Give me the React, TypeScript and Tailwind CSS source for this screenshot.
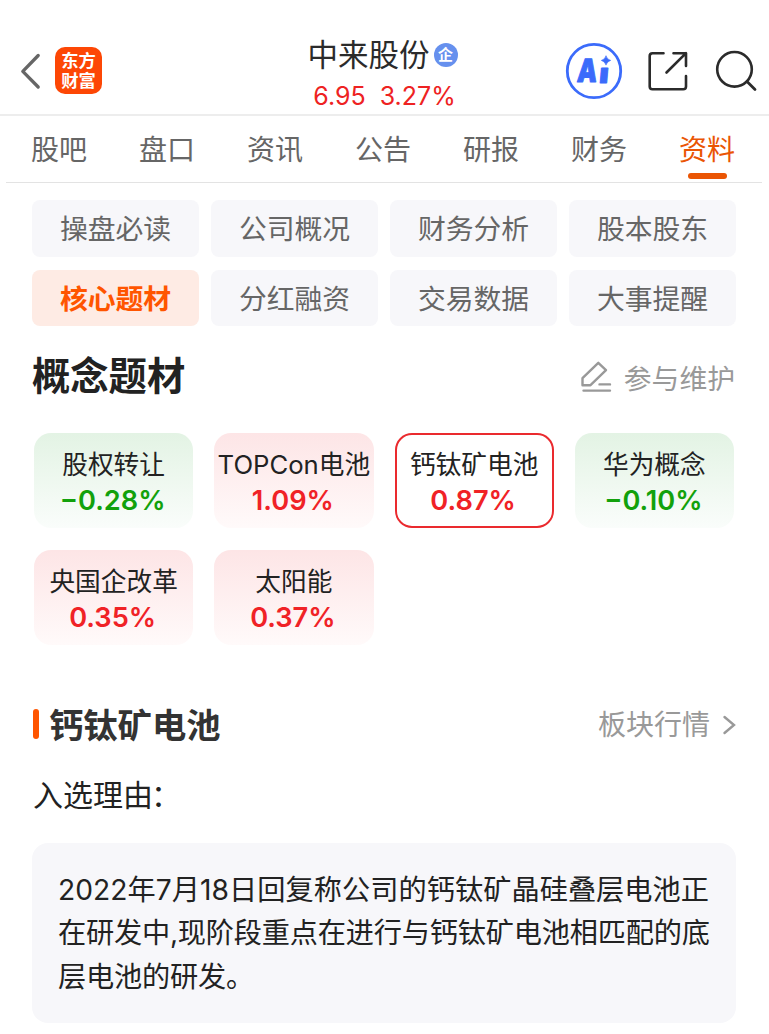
import React from "react";
import clsx from "clsx";

const tabs = ["股吧", "盘口", "资讯", "公告", "研报", "财务", "资料"];

const menus = [
  "操盘必读",
  "公司概况",
  "财务分析",
  "股本股东",
  "核心题材",
  "分红融资",
  "交易数据",
  "大事提醒",
];

const concepts = [
  { name: "股权转让", change: "−0.28%", up: false },
  { name: "TOPCon电池", change: "1.09%", up: true },
  { name: "钙钛矿电池", change: "0.87%", up: true },
  { name: "华为概念", change: "−0.10%", up: false },
  { name: "央国企改革", change: "0.35%", up: true },
  { name: "太阳能", change: "0.37%", up: true },
];

const reason = [
  { text: "2022年7月18日回复称公司的钙钛矿晶硅叠层电池正", tracking: "tracking-[0.05px]" },
  { text: "在研发中,现阶段重点在进行与钙钛矿电池相匹配的底", tracking: "tracking-[-0.2px]" },
  { text: "层电池的研发。", tracking: "tracking-[-0.2px]" },
];

function AiIcon() {
  return (
    <svg width="58" height="58" viewBox="0 0 58 58" fill="none">
      <circle cx="29" cy="29" r="26.7" stroke="#3b6bfb" strokeWidth="2.8" />
      <g
        fontFamily="Inter"
        fontWeight="900"
        fill="#3b6bfb"
        stroke="#3b6bfb"
        strokeWidth="1"
        strokeLinejoin="round"
      >
        <text transform="translate(11.4 40) skewX(-5) scale(.78 1)" fontSize="32">
          A
        </text>
        <text transform="translate(33.6 40.6) skewX(-5) scale(1.08 .92)" fontSize="30">
          ı
        </text>
      </g>
      <path
        d="M41 13.7q1 3.8 4.7 4.7q-3.7 1-4.7 4.7q-1-3.7-4.7-4.7q3.7-.9 4.7-4.7z"
        fill="#3b6bfb"
        stroke="#3b6bfb"
        strokeWidth=".6"
      />
    </svg>
  );
}

function Header() {
  return (
    <header className="grid h-[116px] grid-cols-[1fr_auto_1fr] border-b-2 border-[#ededed] pt-[36px]">
      <div className="flex items-start pl-[20px]">
        <svg className="mt-[16px]" width="22" height="38" viewBox="0 0 22 38" fill="none">
          <path
            d="M18.2 3.5L2.8 19.3L18.2 35"
            stroke="#666"
            strokeWidth="3.3"
            strokeLinecap="round"
            strokeLinejoin="round"
          />
        </svg>
        <div className="mt-[11px] ml-[13px] flex h-[47px] w-[47px] flex-col items-center justify-center rounded-[10px] bg-[#fd4705] text-[17.3px] leading-[19.5px] font-bold text-white">
          <span>东方</span>
          <span>财富</span>
        </div>
      </div>
      <div className="flex flex-col items-center">
        <div className="mr-[4px] flex items-center">
          <span className="text-[30.5px] leading-[38px] text-[#2b2b2b]">中来股份</span>
          <span className="ml-[4px] flex h-6 w-6 items-center justify-center rounded-full bg-[#6690ee] text-[15px] leading-6 font-bold text-white">
            企
          </span>
        </div>
        <div className="mt-[5px] flex gap-[14px] text-[25px] leading-[34px] text-[#ee2222]">
          <span>6.95</span>
          <span>3.27%</span>
        </div>
      </div>
      <div className="flex items-start justify-end pr-[10px]">
        <span className="mt-[6px]">
          <AiIcon />
        </span>
        <svg className="mt-[14px] ml-[24px]" width="44" height="44" viewBox="0 0 44 44" fill="none">
          <path
            d="M16.5 3.2H5.5Q2.7 3.2 2.7 6V36.5Q2.7 39.3 5.5 39.3H36.2Q39 39.3 39 36.5V26M26.5 3.2H39V16M39 3.2L19.5 22.5"
            stroke="#2b2b2b"
            strokeWidth="2.6"
            strokeLinecap="round"
            strokeLinejoin="round"
          />
        </svg>
        <svg className="mt-[14px] ml-[24px]" width="44" height="44" viewBox="0 0 44 44" fill="none">
          <circle cx="19.5" cy="19.3" r="17.3" stroke="#2b2b2b" strokeWidth="2.6" />
          <path d="M32 31.5L40 39.5" stroke="#2b2b2b" strokeWidth="2.8" strokeLinecap="round" />
        </svg>
      </div>
    </header>
  );
}

function App() {
  return (
    <div className="h-[1034px] w-[769px] overflow-hidden bg-white font-['Inter','Noto_Sans_CJK_SC',sans-serif]">
      <Header />

      <nav className="mr-[7px] ml-[6px] flex h-[67px] gap-[52px] border-b border-[#e3e3e3] pl-[25px] text-[28px] leading-[40px] text-[#666]">
        {tabs.map((t) => (
          <div
            key={t}
            className={clsx(
              "flex w-[56px] shrink-0 flex-col items-center pt-[14px]",
              t === "资料" && "text-[#ea5504]"
            )}
          >
            <span className="whitespace-nowrap">{t}</span>
            {t === "资料" && (
              <span className="mt-[3px] h-[6px] w-[39px] rounded-full bg-[#ea5504]" />
            )}
          </div>
        ))}
      </nav>

      <div className="mt-[17px] grid grid-cols-4 gap-x-[12px] gap-y-[13px] pr-[33px] pl-[32px]">
        {menus.map((m) => (
          <div
            key={m}
            className={clsx(
              "h-[56.5px] rounded-[8px] pt-px text-center text-[27.8px] leading-[57px] whitespace-nowrap",
              m === "核心题材"
                ? "bg-[#feebe4] font-bold text-[#ff5500]"
                : "bg-[#f7f7fa] text-[#666]"
            )}
          >
            {m}
          </div>
        ))}
      </div>

      <div className="mt-[22px] flex h-[56px] items-center justify-between pr-[34px] pl-[32px]">
        <h2 className="text-[38.3px] leading-[56px] font-bold text-[#222]">概念题材</h2>
        <div className="flex items-center text-[27.8px] leading-[40px] text-[#999]">
          <svg className="mr-[12px]" width="32" height="32" viewBox="0 0 32 32" fill="none">
            <path
              d="M2.5 25.2V18.2L18.3 2.8L26 10.2L10.5 25.2ZM19.5 24.4H30M3.5 30.6H30"
              stroke="#999"
              strokeWidth="2.4"
              strokeLinecap="round"
              strokeLinejoin="round"
            />
          </svg>
          <span className="mt-[5px]">参与维护</span>
        </div>
      </div>

      <div className="mt-[29px] grid grid-cols-4 gap-x-[21px] gap-y-[22px] pr-[35px] pl-[34px]">
        {concepts.map((c) => (
          <div
            key={c.name}
            className={clsx(
              "flex h-[95px] flex-col items-center rounded-[17px] pt-[14px]",
              c.name === "钙钛矿电池"
                ? "bg-white ring-2 ring-[#ea2a2e] ring-inset"
                : c.up
                  ? "bg-linear-to-b from-[#fde5e6] to-[#fffafa]"
                  : "bg-linear-to-b from-[#e3f3e4] to-[#fafdfb]"
            )}
          >
            <span className="text-[25.7px] leading-[36px] whitespace-nowrap text-[#222]">
              {c.name}
            </span>
            <span
              className={clsx(
                "mr-[2px] text-[27.2px] leading-[36px] font-semibold",
                c.up ? "text-[#f02226]" : "text-[#12a10c]"
              )}
            >
              {c.change}
            </span>
          </div>
        ))}
      </div>

      <div className="mt-[54px] flex h-[50px] items-center justify-between pr-[33px] pl-[33px]">
        <div className="flex items-center">
          <span className="h-[30px] w-[6px] rounded-full bg-[#ff5500]" />
          <h3 className="mt-[3px] ml-[10px] text-[34.3px] leading-[50px] font-bold text-[#333]">
            钙钛矿电池
          </h3>
        </div>
        <div className="flex items-center pt-[2px] text-[28px] leading-[40px] text-[#999]">
          板块行情
          <svg className="ml-[12px]" width="14" height="20" viewBox="0 0 14 20" fill="none">
            <path d="M2.5 2L12 10L2.5 18" stroke="#999" strokeWidth="2.4" strokeLinecap="round" />
          </svg>
        </div>
      </div>

      <p className="mt-[24px] pl-[33px] text-[30px] leading-[44px] text-[#222]">
        入选理由<span className="-ml-[2px]">：</span>
      </p>

      <div className="mr-[33px] ml-[32px] mt-[26px] h-[180px] rounded-[16px] bg-[#f7f7fa] pt-[26px] pl-[26px] text-[28.2px] leading-[43.3px] text-[#222]">
        {reason.map((line) => (
          <p key={line.text} className={clsx("whitespace-nowrap", line.tracking)}>
            {line.text}
          </p>
        ))}
      </div>
    </div>
  );
}

export default App;
